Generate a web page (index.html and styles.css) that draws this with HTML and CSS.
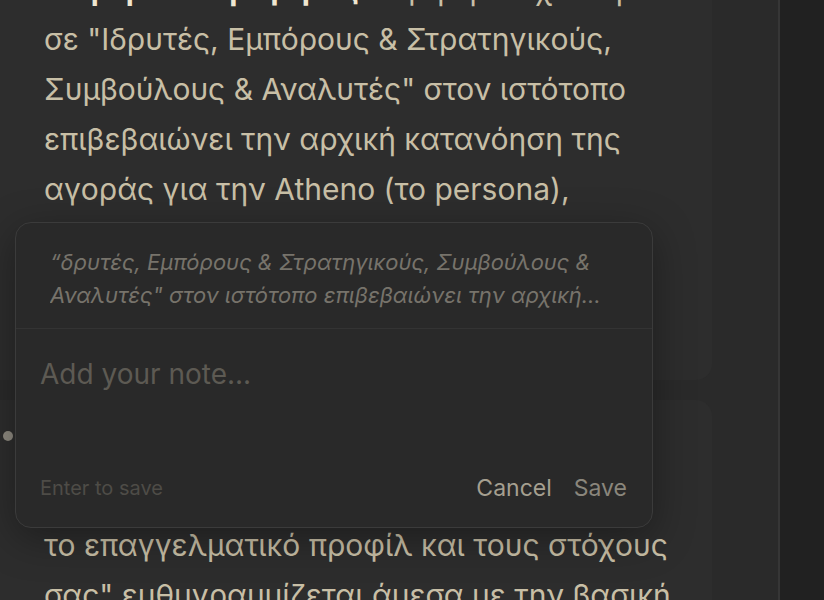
FILE: index.html
```html
<!DOCTYPE html>
<html>
<head>
  <meta charset="utf-8">
  <meta name="viewport" content="width=device-width, initial-scale=1.0">
  <title>Atheno – notes</title>
  <link rel="stylesheet" href="styles.css">
</head>
<body>
  <div class="app">
    <main class="doc">
      <article class="card card-first">
        <p><strong>Επιβεβαίωση αγοράς:</strong> Η ρητή στόχευση σε&nbsp;"Ιδρυτές, Εμπόρους &amp; Στρατηγικούς, Συμβούλους &amp; Αναλυτές" στον ιστότοπο επιβεβαιώνει την αρχική κατανόηση της αγοράς για την Atheno (το persona), ενισχύοντας την αρχική υπόθεση για το ποιοι είναι οι χρήστες και τι χρειάζονται στην καθημερινή τους δουλειά.</p>
      </article>
      <article class="card">
        <span class="marker"></span>
        <p>Η υπόσχεση της πλατφόρμας για "εξατομικευμένες προτάσεις με βάση το&nbsp;επαγγελματικό προφίλ και τους στόχους σας" ευθυγραμμίζεται άμεσα με την βασική ανάγκη των χρηστών.</p>
      </article>

      <div class="note-popover">
        <div class="note-quote">
          <p>“δρυτές, Εμπόρους &amp; Στρατηγικούς, Συμβούλους &amp; Αναλυτές" στον ιστότοπο επιβεβαιώνει την αρχική κατανόηση της αγοράς για την Atheno”</p>
        </div>
        <textarea class="note-input" placeholder="Add your note..."></textarea>
        <div class="note-footer">
          <span class="note-hint">Enter to save</span>
          <div class="note-actions">
            <button class="btn-cancel">Cancel</button>
            <button class="btn-save">Save</button>
          </div>
        </div>
      </div>
    </main>
    <aside class="sidebar"></aside>
  </div>
</body>
</html>
```

FILE: styles.css
```css
body, html {
  margin: 0;
  padding: 0;
  height: 100vh;
  overflow: hidden;
  background: #2a2a2a;
  font-family: "Inter", "Noto Sans", sans-serif;
}
.app {
  display: flex;
  height: 100vh;
}

/* document column */
.doc {
  position: relative;
  flex: 1;
  display: flex;
  flex-direction: column;
  gap: 20px;
  padding-right: 66px;
  overflow: hidden;
}
.card {
  position: relative;
  margin-left: -20px;
  padding: 20px 32px 16px 64px;
  border-radius: 0 16px 16px 0;
  background: #2d2d2d;
  color: #c8bfa6;
  font-size: 30px;
  line-height: 50px;
}
.card p {
  margin: 0;
}
.card strong {
  color: #efe6d0;
}
.card-first {
  margin-top: -56px;
}
.marker {
  position: absolute;
  left: 23px;
  top: 31px;
  width: 10px;
  height: 10px;
  border-radius: 50%;
  background: #8e8a80;
}

/* right rail */
.sidebar {
  width: 44px;
  border-left: 2px solid #363636;
  background: #212121;
}

/* note popover */
.note-popover {
  position: absolute;
  left: 15px;
  top: 222px;
  width: 638px;
  height: 306px;
  box-sizing: border-box;
  display: flex;
  flex-direction: column;
  border: 1px solid #3b3b3b;
  border-radius: 16px;
  background: #292929;
  box-shadow: 0 10px 40px rgba(0,0,0,0.35);
}
.note-quote {
  padding: 23px 24px 16px 34px;
  border-bottom: 1px solid #333;
}
.note-quote p {
  margin: 0;
  font-size: 22px;
  line-height: 33px;
  font-style: italic;
  color: #77736b;
  display: -webkit-box;
  -webkit-line-clamp: 2;
  -webkit-box-orient: vertical;
  overflow: hidden;
}
.note-input {
  flex: 1;
  padding: 26px 24px 0;
  border: none;
  outline: none;
  resize: none;
  background: transparent;
  color: #c8bfa6;
  font-family: "Inter", "Noto Sans", sans-serif;
  font-size: 28px;
  line-height: 38px;
}
.note-input::placeholder {
  color: #5d5a53;
}
.note-footer {
  display: flex;
  justify-content: space-between;
  align-items: center;
  height: 30px;
  padding: 0 25px 24px 24px;
}
.note-hint {
  font-size: 20px;
  color: #4e4c47;
}
.note-actions {
  display: flex;
  gap: 22px;
}
.note-actions button {
  padding: 0;
  border: none;
  background: none;
  font-family: "Inter", "Noto Sans", sans-serif;
  font-size: 23px;
  cursor: pointer;
}
.btn-cancel { color: #a59f90; }
.btn-save { color: #8a867c; }
```
